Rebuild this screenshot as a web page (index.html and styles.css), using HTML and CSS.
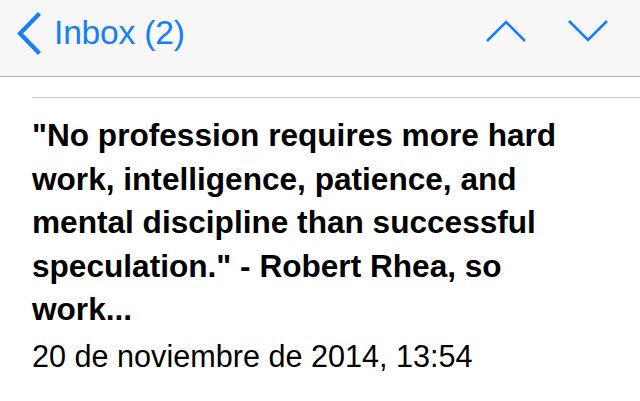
FILE: index.html
```html
<!DOCTYPE html>
<html lang="es">
<head>
<meta charset="utf-8">
<title>Inbox</title>
<link rel="stylesheet" href="styles.css">
</head>
<body>
<header class="navbar">
  <a class="back">
    <svg class="back-icon" width="30" height="44" viewBox="0 0 30 44">
      <polyline points="23,3 5,21.5 23,40" fill="none" stroke="#157efb" stroke-width="4.2" stroke-linecap="square" stroke-linejoin="miter"/>
    </svg>
    <span class="back-label">Inbox (2)</span>
  </a>
  <div class="nav-arrows">
    <svg class="arrow" width="44" height="26" viewBox="0 0 44 26">
      <polyline points="2,23 21,4 40,23" fill="none" stroke="#157efb" stroke-width="2.6"/>
    </svg>
    <svg class="arrow" width="44" height="26" viewBox="0 0 44 26">
      <polyline points="3,3 22,22 41,3" fill="none" stroke="#157efb" stroke-width="2.6"/>
    </svg>
  </div>
</header>
<main class="message">
  <div class="divider"></div>
  <h1 class="subject">"No profession requires more hard<br>work, intelligence, patience, and<br>mental discipline than successful<br>speculation." - Robert Rhea, so<br>work...</h1>
  <p class="date">20 de noviembre de 2014, 13:54</p>
</main>
</body>
</html>
```

FILE: styles.css
```css
html, body {
  margin: 0;
  padding: 0;
  background: #ffffff;
}
body {
  width: 640px;
  height: 401px;
  overflow: hidden;
  font-family: "Liberation Sans", Arial, sans-serif;
  color: #000;
}
.navbar {
  height: 76px;
  background: #f7f7f8;
  border-bottom: 1px solid #b2b2b2;
  display: flex;
  align-items: center;
  justify-content: space-between;
  padding: 0 30px 0 15px;
}
.back {
  display: flex;
  align-items: center;
  gap: 9px;
  color: #157efb;
  margin-top: -8px;
}
.back-icon {
  display: block;
}
.back-label {
  font-size: 33.6px;
  line-height: 40px;
  letter-spacing: -0.2px;
  margin-top: -3px;
}
.nav-arrows {
  display: flex;
  align-items: center;
  gap: 37px;
  margin-top: -14px;
}
.arrow {
  display: block;
}
.message {
  padding: 20px 0 0 32px;
}
.divider {
  height: 1px;
  background: #c8c7cc;
}
.subject {
  margin: 16px 20px 0 0;
  font-size: 31.6px;
  font-weight: bold;
  line-height: 43.5px;
}
.date {
  margin: 3px 0 0 0;
  font-size: 30.6px;
  line-height: 43.5px;
}
```
